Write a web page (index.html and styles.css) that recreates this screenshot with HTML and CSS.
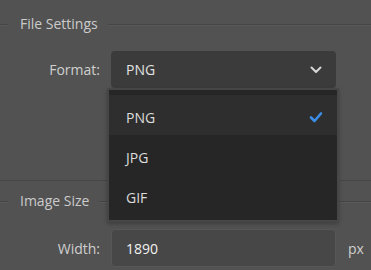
FILE: index.html
```html
<!DOCTYPE html>
<html>
<head>
<meta charset="utf-8">
<link rel="stylesheet" href="styles.css">
</head>
<body>
<div class="panel">
  <section class="group group-file">
    <div class="group-head"><span class="group-title">File Settings</span></div>
    <div class="row">
      <label class="label">Format:</label>
      <div class="select">
        <span class="value">PNG</span>
        <svg class="chevron" width="12" height="8" viewBox="0 0 12 8"><path d="M1.5 1.5 L6 6 L10.5 1.5" fill="none" stroke="#d6d6d6" stroke-width="2" stroke-linecap="round" stroke-linejoin="round"/></svg>
      </div>
    </div>
  </section>
  <section class="group group-size">
    <div class="group-head"><span class="group-title">Image Size</span></div>
    <div class="row">
      <label class="label">Width:</label>
      <div class="input"><span class="value num">1890</span></div>
      <span class="unit">px</span>
    </div>
  </section>
  <ul class="menu">
    <li class="item selected"><span>PNG</span>
      <svg class="check" width="14" height="12" viewBox="0 0 14 12"><path d="M2 6.5 L5.5 10 L12 2.5" fill="none" stroke="#3b8de6" stroke-width="2.6" stroke-linecap="round" stroke-linejoin="round"/></svg>
    </li>
    <li class="item"><span>JPG</span></li>
    <li class="item"><span>GIF</span></li>
  </ul>
</div>
</body>
</html>
```
FILE: styles.css
```css
* { box-sizing: border-box; }
html, body {
  margin: 0;
  padding: 0;
  background: #525252;
  width: 371px;
  height: 270px;
  overflow: hidden;
}
body {
  font-family: "Open Sans", "Noto Sans", sans-serif;
  font-size: 14px;
  color: #cfcfcf;
}
.panel {
  position: relative;
  padding-top: 14px;
}
.group-head {
  display: flex;
  align-items: center;
  height: 20px;
}
.group-head::before,
.group-head::after {
  content: "";
  height: 1px;
  background: #454545;
  box-shadow: 0 1px 0 #595959;
}
.group-head::before { width: 8px; }
.group-head::after { flex: 1; }
.group-title {
  padding: 0 10px 0 12px;
  line-height: 20px;
  color: #cbcbcb;
}
.group-file {
  padding-bottom: 92px;
  border-bottom: 1px solid #464646;
}
.group-file .row { margin-top: 17px; }
.group-size { margin-top: 10px; }
.group-size .row { margin-top: 18px; }
.row {
  display: flex;
  align-items: center;
}
.label {
  width: 100px;
  text-align: right;
  color: #cfcfcf;
  margin-right: 11px;
}
.select {
  width: 225px;
  height: 37px;
  background: #3b3b3b;
  border-radius: 4px;
  display: flex;
  align-items: center;
  justify-content: space-between;
  padding: 0 14px 0 15px;
}
.value { color: #e2e2e2; }
.input {
  width: 225px;
  height: 38px;
  background: #474747;
  border: 1px solid #575757;
  border-radius: 4px;
  display: flex;
  align-items: center;
  padding: 0 14px;
}
.num { color: #f2f2f2; }
.unit {
  margin-left: 12px;
  color: #cfcfcf;
}
.menu {
  position: absolute;
  left: 107px;
  top: 88px;
  width: 232px;
  height: 134px;
  margin: 0;
  padding: 5px 0 0;
  list-style: none;
  background: #262626;
  border: 2px solid #464646;
  box-shadow: 0 2px 4px rgba(0,0,0,0.25);
}
.item {
  height: 40px;
  display: flex;
  align-items: center;
  justify-content: space-between;
  padding: 4px 14px 0 17px;
  color: #dcdcdc;
}
.item.selected { background: #2e2e2e; }
```
